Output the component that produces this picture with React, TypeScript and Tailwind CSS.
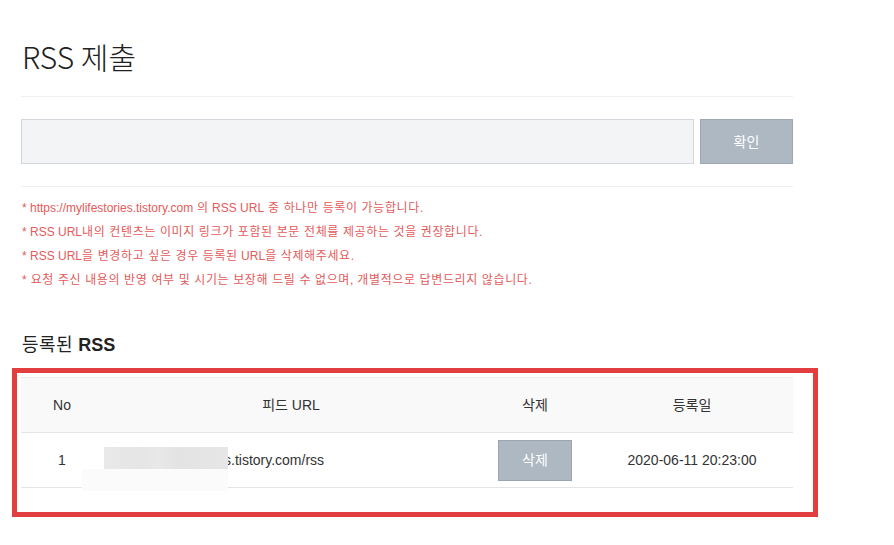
import React from "react";

const notes = [
  "* https://mylifestories.tistory.com 의 RSS URL 중 하나만 등록이 가능합니다.",
  "* RSS URL내의 컨텐츠는 이미지 링크가 포함된 본문 전체를 제공하는 것을 권장합니다.",
  "* RSS URL을 변경하고 싶은 경우 등록된 URL을 삭제해주세요.",
  "* 요청 주신 내용의 반영 여부 및 시기는 보장해 드릴 수 없으며, 개별적으로 답변드리지 않습니다.",
];

const font = "font-['Liberation_Sans','Noto_Sans_CJK_KR',sans-serif]";

// hangul in the reference runs a little wider than Noto, so space those runs out
function Note({ text }: { text: string }) {
  const parts = text.split(/([\uAC00-\uD7A3 ]*[\uAC00-\uD7A3]+)/);
  return (
    <li>
      {parts.map((p, i) =>
        /[\uAC00-\uD7A3]/.test(p) ? (
          <span key={i} className="tracking-[0.62px]">
            {p}
          </span>
        ) : (
          <span key={i}>{p}</span>
        )
      )}
    </li>
  );
}

export default function App() {
  return (
    <div className={`w-[894px] h-[545px] bg-white overflow-hidden ${font} text-[#333]`}>
      <div className="pl-[21px] w-[793px] pt-[36px]">
        <h1 className="h-[40px] leading-[40px] text-[30px] font-light text-[#222] pl-[1px] font-['Noto_Sans_CJK_KR','Liberation_Sans',sans-serif]">
          RSS 제출
        </h1>
        <div className="mt-[20px] h-px bg-[#efefef]" />

        <div className="mt-[22px] flex h-[45px] gap-[6px]">
          <input
            className="w-[673px] h-full bg-[#f3f4f6] border border-[#d3d6da] outline-none px-3"
            type="text"
          />
          <button className="w-[93px] h-full bg-[#adb8c2] border border-[#9da8b3] text-white text-[14px] font-['Noto_Sans_CJK_KR',sans-serif]">
            확인
          </button>
        </div>
        <div className="mt-[22px] h-px bg-[#efefef]" />

        <ul className="mt-[9px] text-[12px] leading-[24px] text-[#e35b5b] pl-[1px]">
          {notes.map((n) => (
            <Note key={n} text={n} />
          ))}
        </ul>

        <h2 className="mt-[40px] h-[26px] leading-[26px] text-[18px] text-[#222] pl-[1px]">
          <span className="tracking-[0.5px]">등록된</span> <span className="font-bold">RSS</span>
        </h2>
      </div>

      <div className="mt-[10px] ml-[12px] w-[806px] border-[5px] border-[#e23d3f] pt-[4px] pl-[4px] pb-[24px]">
        <div className="w-[772px] text-[14px]">
          <div className="grid grid-cols-[82px_376px_112px_202px] h-[56px] items-center bg-[#f9f9f9] border-t border-[#ececec] border-b border-b-[#e4e4e4] text-[#333]">
            <div className="text-center">No</div>
            <div className="text-center">피드 URL</div>
            <div className="text-center">삭제</div>
            <div className="text-center">등록일</div>
          </div>
          <div className="relative grid grid-cols-[82px_376px_112px_202px] h-[55px] items-center border-b border-[#e4e4e4]">
            <div className="text-center">1</div>
            <div className="pl-[121px] text-[#333]">s.tistory.com/rss</div>
            <div className="flex justify-center">
              <button className="w-[74px] h-[41px] bg-[#adb8c2] border border-[#9aa5b0] text-white text-[14px]">
                삭제
              </button>
            </div>
            <div className="text-center">2020-06-11 20:23:00</div>

            <div className="absolute left-[83px] top-[14px] w-[124px] h-[22px] bg-[linear-gradient(90deg,#e9e9e9_0%,#e5e5e5_30%,#e8e8e8_45%,#e3e3e3_60%,#e6e6e6_100%)]" />
            <div className="absolute left-[61px] top-[36px] w-[146px] h-[22px] bg-[#fbfbfb]" />
          </div>
        </div>
      </div>
    </div>
  );
}
